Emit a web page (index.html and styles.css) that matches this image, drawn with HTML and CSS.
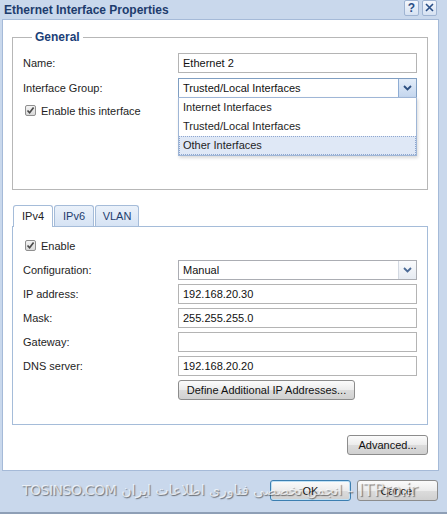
FILE: index.html
```
<!DOCTYPE html>
<html lang="en">
<head>
  <meta charset="UTF-8">
  <title>Ethernet Interface Properties</title>
  <link rel="stylesheet" href="styles.css">
</head>
<body>
  <div class="dialog">
    <div class="titlebar">
      <span class="title">Ethernet Interface Properties</span>
      <div class="title-tools">
        <span class="tool">?</span>
        <span class="tool">
          <svg width="11" height="11" viewBox="0 0 11 11"><path d="M2 2 L9 9 M9 2 L2 9" stroke="#2a4f86" stroke-width="1.6"/></svg>
        </span>
      </div>
    </div>

    <div class="panel">
      <fieldset class="group">
        <legend>General</legend>
        <div class="form-grid">
          <label>Name:</label>
          <div class="field">Ethernet 2</div>
          <label>Interface Group:</label>
          <div class="select-wrap">
            <div class="field select active">
              Trusted/Local Interfaces
              <span class="arrow active">
                <svg width="9" height="6" viewBox="0 0 9 6"><path d="M1 1 L4.5 4.5 L8 1" fill="none" stroke="#2c4f80" stroke-width="1.8"/></svg>
              </span>
            </div>
            <ul class="droplist">
              <li>Internet Interfaces</li>
              <li>Trusted/Local Interfaces</li>
              <li class="selected">Other Interfaces</li>
            </ul>
          </div>
        </div>
        <div class="check-row">
          <span class="checkbox">
            <svg width="9" height="9" viewBox="0 0 9 9"><path d="M1.5 4.5 L3.6 6.8 L7.6 1.6" fill="none" stroke="#4a4a4a" stroke-width="1.7"/></svg>
          </span>
          Enable this interface
        </div>
      </fieldset>

      <div class="tabs">
        <span class="tab current">IPv4</span>
        <span class="tab">IPv6</span>
        <span class="tab">VLAN</span>
      </div>
      <div class="tab-panel">
        <div class="check-row">
          <span class="checkbox">
            <svg width="9" height="9" viewBox="0 0 9 9"><path d="M1.5 4.5 L3.6 6.8 L7.6 1.6" fill="none" stroke="#4a4a4a" stroke-width="1.7"/></svg>
          </span>
          Enable
        </div>
        <div class="form-grid ip-grid">
          <label>Configuration:</label>
          <div class="field select">
            Manual
            <span class="arrow">
              <svg width="9" height="6" viewBox="0 0 9 6"><path d="M1 1 L4.5 4.5 L8 1" fill="none" stroke="#4b6a96" stroke-width="1.8"/></svg>
            </span>
          </div>
          <label>IP address:</label>
          <div class="field">192.168.20.30</div>
          <label>Mask:</label>
          <div class="field">255.255.255.0</div>
          <label>Gateway:</label>
          <div class="field"></div>
          <label>DNS server:</label>
          <div class="field">192.168.20.20</div>
          <span></span>
          <div><button class="btn define">Define Additional IP Addresses...</button></div>
        </div>
      </div>

      <div class="advanced-row">
        <button class="btn advanced">Advanced...</button>
      </div>
    </div>

    <div class="footer">
      <button class="btn ok">OK</button>
      <button class="btn">Cancel</button>
      <div class="watermark">
        <span class="wm-site">TOSINSO.COM</span>
        <span class="wm-fa">انجمن تخصصی فناوری اطلاعات ایران</span>
        <span class="wm-en">- ITPro.ir</span>
      </div>
    </div>
  </div>
</body>
</html>
```

FILE: styles.css
```
body {
  margin: 0;
  font-family: 'Liberation Sans', Arial, sans-serif;
  font-size: 11px;
  color: #1e1e1e;
  background: #c9d8ec;
}

.dialog {
  width: 447px;
  height: 514px;
  box-sizing: border-box;
  background: #c9d8ec;
  border-bottom: 2px solid #8e9fb6;
  position: relative;
}

/* barre de titre */
.titlebar {
  height: 19px;
  display: flex;
  align-items: center;
  justify-content: space-between;
  padding: 0 10px 0 4px;
}

.title {
  font-size: 12px;
  font-weight: bold;
  color: #1d3c6d;
}

.title-tools {
  display: flex;
  gap: 3px;
  margin-top: -4px;
}

.tool {
  width: 13px;
  height: 14px;
  border: 1px solid #9fb4d2;
  border-radius: 2px;
  background: linear-gradient(#f3f7fd, #d6e2f2);
  display: flex;
  align-items: center;
  justify-content: center;
  font-weight: bold;
  font-size: 12px;
  color: #2a4f86;
}

.panel {
  width: 437px;
  height: 452px;
  box-sizing: border-box;
  margin-left: 2px;
  background: #fff;
  border: 1px solid #a5bad8;
  padding-top: 10px;
}

.group {
  width: 416px;
  height: 160px;
  box-sizing: border-box;
  margin: 0 0 0 9px;
  border: 1px solid #b7b7b7;
  padding: 9px 10px 0 10px;
}

.group legend {
  font-size: 12px;
  font-weight: bold;
  color: #1b3f77;
  line-height: 14px;
  padding: 0 3px;
  margin-left: 9px;
}

.form-grid {
  display: grid;
  grid-template-columns: 155px 239px;
  grid-auto-rows: 20px;
  row-gap: 5px;
  align-items: center;
}

.ip-grid {
  row-gap: 4px;
  margin-top: 7px;
}

.field {
  height: 20px;
  box-sizing: border-box;
  border: 1px solid #b4b4b4;
  padding: 0 4px;
  line-height: 18px;
  font-size: 11px;
  color: #111;
  background: #fff;
  position: relative;
}

.select {
  border-color: #abadb3;
}

.select.active {
  border-color: #7f9ec2;
}

.arrow {
  position: absolute;
  right: 0;
  top: 0;
  width: 17px;
  height: 18px;
  display: flex;
  align-items: center;
  justify-content: center;
  background: linear-gradient(#fafbfd, #e6ebf2);
  border-left: 1px solid #d3d9e2;
}

.arrow.active {
  background: linear-gradient(#e3edf9, #c4d6ee);
  border-left: 1px solid #8fadd4;
}

.select-wrap {
  position: relative;
}

.droplist {
  position: absolute;
  left: 0;
  top: 19px;
  width: 239px;
  box-sizing: border-box;
  margin: 0;
  padding: 0;
  list-style: none;
  background: #fff;
  border: 1px solid #9fb6d6;
  box-shadow: 1px 2px 3px rgba(0, 0, 0, 0.15);
  z-index: 2;
}

.droplist li {
  height: 17px;
  line-height: 17px;
  padding: 0 3px;
  border: 1px solid transparent;
}

.droplist li.selected {
  background: #dfe8f6;
  border: 1px dotted #8ea6cf;
}

.check-row {
  display: flex;
  align-items: center;
  gap: 5px;
  height: 15px;
  margin-top: 5px;
  margin-left: 2px;
}

.checkbox {
  width: 11px;
  height: 11px;
  box-sizing: border-box;
  border: 1px solid #8f8f8f;
  border-radius: 2px;
  background: linear-gradient(#f4f4f4, #d9d9d9);
  display: flex;
  align-items: center;
  justify-content: center;
}

/* onglets */
.tabs {
  display: flex;
  gap: 1px;
  margin: 15px 0 0 10px;
  height: 21px;
  position: relative;
  z-index: 1;
}

.tab {
  width: 40px;
  height: 21px;
  box-sizing: border-box;
  border: 1px solid #a5bcd9;
  border-bottom: none;
  border-radius: 3px 3px 0 0;
  background: linear-gradient(#eaf1fa, #d6e3f4);
  text-align: center;
  line-height: 21px;
  color: #1d3c6d;
}

.tab:nth-child(3) {
  width: 44px;
}

.tab.current {
  background: #fff;
  height: 22px;
  color: #222;
}

.tab-panel {
  width: 416px;
  height: 199px;
  box-sizing: border-box;
  margin-left: 9px;
  border: 1px solid #a5bcd9;
  padding: 6px 10px 0 10px;
}

.btn {
  font-family: 'Liberation Sans', Arial, sans-serif;
  font-size: 11px;
  color: #111;
  height: 20px;
  padding: 0 6px;
  white-space: nowrap;
  border: 1px solid #8c8c8c;
  border-radius: 3px;
  background: linear-gradient(#fbfbfb 0%, #ececec 50%, #dcdcdc 51%, #d0d0d0 100%);
}

.define {
  width: 177px;
  padding: 0 4px;
}

.advanced-row {
  display: flex;
  justify-content: flex-end;
  padding-right: 10px;
  margin-top: 10px;
}

.advanced {
  width: 81px;
}

.footer {
  display: flex;
  justify-content: flex-end;
  gap: 6px;
  padding: 9px 9px 0 0;
  position: relative;
}

.footer .btn {
  width: 81px;
  height: 21px;
}

.footer .ok {
  border-color: #3c7fb1;
  box-shadow: inset 0 0 0 1px #bfe0f5;
}

.watermark {
  position: absolute;
  left: 22px;
  top: 9px;
  width: 410px;
  display: flex;
  align-items: center;
  gap: 5px;
  pointer-events: none;
  font-family: 'DejaVu Sans', sans-serif;
  color: rgba(255, 255, 255, 0.7);
  text-shadow: 1px 1px 1px rgba(60, 60, 60, 0.65);
}

.wm-site {
  font-size: 14px;
  letter-spacing: -0.5px;
}

.wm-fa {
  font-size: 14px;
  white-space: nowrap;
}

.wm-en {
  font-size: 17px;
  white-space: nowrap;
}
```
